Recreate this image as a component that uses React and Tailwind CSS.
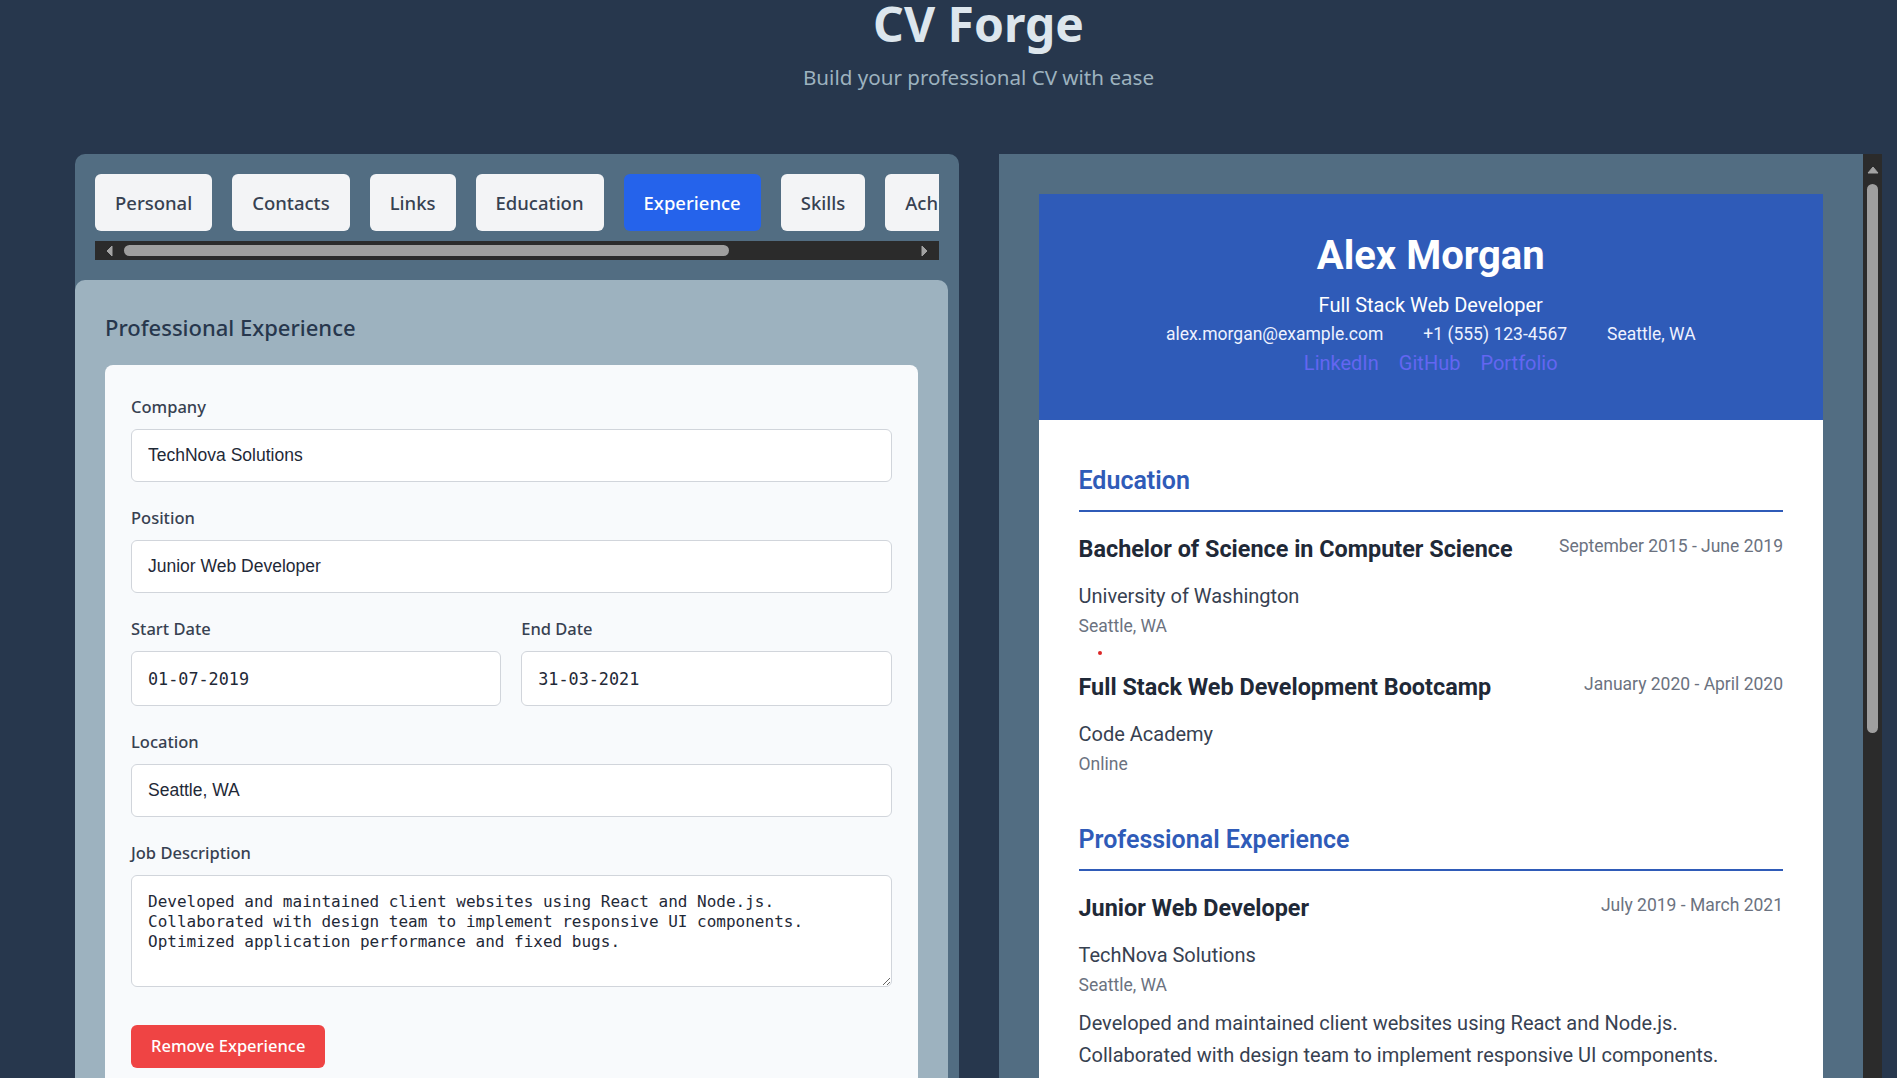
import React, { useState } from "react";

const tabs = ["Personal", "Contacts", "Links", "Education", "Experience", "Skills", "Achievements", "Certifications"];

const education = [
  {
    degree: "Bachelor of Science in Computer Science",
    school: "University of Washington",
    location: "Seattle, WA",
    dates: "September 2015 - June 2019",
  },
  {
    degree: "Full Stack Web Development Bootcamp",
    school: "Code Academy",
    location: "Online",
    dates: "January 2020 - April 2020",
  },
];

const jobDescription =
  "Developed and maintained client websites using React and Node.js.\nCollaborated with design team to implement responsive UI components.\nOptimized application performance and fixed bugs.";

const Field = ({ label, children, mb = "mb-6" }) => (
  <div className={mb}>
    <label className="block mb-[10px] text-[16.5px] leading-6 font-medium text-[#374151]">{label}</label>
    {children}
  </div>
);

const TextInput = ({ value, mono }) => (
  <input
    type="text"
    defaultValue={value}
    className={`w-full px-4 bg-white border border-[#d1d5db] rounded-md text-[#1f2937] outline-none ${
      mono ? "h-[55px] font-['DejaVu_Sans_Mono',monospace] text-[16.8px]" : "h-[53px] font-['Liberation_Sans',Arial,sans-serif] text-[17.5px]"
    }`}
  />
);

// dark scrollbar look-alikes (headless hides the native ones)
const Arrow = ({ dir }) => {
  const pts = { left: "7,1 7,11 2,6", right: "2,1 2,11 7,6", up: "1,8 11,8 6,2" }[dir];
  const box = dir === "up" ? "0 0 12 10" : "0 0 9 12";
  return (
    <svg viewBox={box} className={dir === "up" ? "w-[12px] h-[10px]" : "w-[9px] h-[12px]"}>
      <polygon points={pts} fill="#a3a3a3" strokeLinejoin="round" stroke="#a3a3a3" strokeWidth="1" />
    </svg>
  );
};

const SectionTitle = ({ children }) => (
  <h3 className="text-[25px] leading-8 font-semibold text-[#2f5bb8] pb-[13px] border-b-2 border-[#2f5bb8] mb-[22px]">{children}</h3>
);

const EntryHead = ({ title, dates }) => (
  <div className="flex justify-between items-start mb-[18px]">
    <h4 className="text-[23.4px] leading-[30px] font-bold text-[#1f2937]">{title}</h4>
    <span className="text-[17.5px] leading-6 text-[#6b7280]">{dates}</span>
  </div>
);

export default function App() {
  const [active, setActive] = useState("Experience");

  return (
    <div className="h-screen overflow-hidden bg-[#27374d] font-['Noto_Sans',sans-serif]">
      <div className="pl-[75px] pr-[15px]">
        {/* header */}
        <header className="text-center">
          <h1 className="text-[48px] leading-none font-bold text-[#dde6ed]">CV Forge</h1>
          <p className="mt-[15px] text-[20.6px] leading-7 text-[#9db2bf]">Build your professional CV with ease</p>
        </header>

        <div className="mt-[63px] grid grid-cols-2 gap-10">
          {/* editor */}
          <div className="bg-[#526d82] rounded-t-[10px]">
            <div className="p-5">
              <div className="flex gap-5 overflow-x-auto pb-[10px] [scrollbar-width:none]">
                {tabs.map((t) => (
                  <button
                    key={t}
                    onClick={() => setActive(t)}
                    className={`shrink-0 px-5 py-[15px] rounded-md text-[18.5px] leading-[27px] font-medium ${
                      active === t ? "bg-[#2563eb] text-white" : "bg-[#f3f4f6] text-[#374151]"
                    }`}
                  >
                    {t}
                  </button>
                ))}
              </div>
              <div className="h-[19px] bg-[#2b2b2b] flex items-center px-[10px] gap-[10px]">
                <Arrow dir="left" />
                <div className="h-[11px] w-[605px] rounded-full bg-[#9f9f9f]" />
                <div className="flex-1" />
                <Arrow dir="right" />
              </div>
            </div>

            <section className="mr-[11px] bg-[#9db2bf] rounded-t-[10px] px-[30px] pt-[31px] pb-10">
              <h2 className="text-[22px] leading-[33px] font-medium text-[#27374d] mb-[21px]">Professional Experience</h2>

              <div className="bg-[#f8fafc] rounded-lg px-[26px] pt-[30px] pb-8">
                <Field label="Company">
                  <TextInput value="TechNova Solutions" />
                </Field>
                <Field label="Position">
                  <TextInput value="Junior Web Developer" />
                </Field>
                <div className="grid grid-cols-2 gap-5">
                  <Field label="Start Date">
                    <TextInput value="01-07-2019" mono />
                  </Field>
                  <Field label="End Date">
                    <TextInput value="31-03-2021" mono />
                  </Field>
                </div>
                <Field label="Location">
                  <TextInput value="Seattle, WA" />
                </Field>
                <Field label="Job Description" mb="mb-[38px]">
                  <textarea
                    defaultValue={jobDescription}
                    className="block w-full h-[112px] px-4 py-4 bg-white border border-[#d1d5db] rounded-md text-[#1f2937] font-['DejaVu_Sans_Mono',monospace] text-[16px] leading-5 outline-none"
                  />
                </Field>
                <button className="h-[43px] px-5 rounded-md bg-[#ef4444] text-white text-[16.5px] font-medium">
                  Remove Experience
                </button>
              </div>
            </section>
          </div>

          {/* preview */}
          <div className="flex h-[1000px]">
            <div className="flex-1 overflow-hidden bg-[#526d82] p-10">
              <div className="bg-white font-['Roboto',sans-serif]">
                <div className="bg-[#2f5bb8] text-center pt-10 pb-[43px]">
                  <h1 className="text-[40px] leading-[44px] font-bold text-white">Alex Morgan</h1>
                  <p className="mt-[13px] text-[20px] leading-7 text-white">Full Stack Web Developer</p>
                  <div className="mt-[2px] flex justify-center gap-10 text-[17.5px] leading-[26px] text-[#eef2ff]">
                    <span>alex.morgan@example.com</span>
                    <span>+1 (555) 123-4567</span>
                    <span>Seattle, WA</span>
                  </div>
                  <div className="mt-[2px] flex justify-center gap-5 text-[20px] leading-7 text-[#6366f1]">
                    <a href="#">LinkedIn</a>
                    <a href="#">GitHub</a>
                    <a href="#">Portfolio</a>
                  </div>
                </div>

                <div className="px-10 pt-[45px] pb-16">
                  <section className="mb-[48px]">
                    <SectionTitle>Education</SectionTitle>
                    {education.map((e, i) => (
                      <div key={e.degree}>
                        <EntryHead title={e.degree} dates={e.dates} />
                        <p className="text-[20px] leading-7 text-[#374151]">{e.school}</p>
                        <p className="mt-[4px] text-[17.5px] leading-6 text-[#6b7280]">{e.location}</p>
                        {i === 0 && <div className="mt-[13px] mb-[17px] ml-[19px] w-[4px] h-[4px] rounded-full bg-[#dc2626]" />}
                      </div>
                    ))}
                  </section>

                  <section className="mb-[48px]">
                    <SectionTitle>Professional Experience</SectionTitle>
                    <EntryHead title="Junior Web Developer" dates="July 2019 - March 2021" />
                    <p className="text-[20px] leading-7 text-[#374151]">TechNova Solutions</p>
                    <p className="mt-[4px] text-[17.5px] leading-6 text-[#6b7280]">Seattle, WA</p>
                    <p className="mt-[10px] text-[20px] leading-8 text-[#374151] whitespace-pre-line">{jobDescription}</p>
                  </section>

                  <section className="mb-[48px]">
                    <SectionTitle>Skills</SectionTitle>
                    <div className="flex flex-wrap gap-3">
                      {["JavaScript", "React", "Node.js", "Express", "MongoDB", "HTML & CSS", "Tailwind CSS", "Git"].map((s) => (
                        <span key={s} className="px-3 py-1 rounded bg-[#e8eefb] text-[#2f5bb8] text-[17px]">{s}</span>
                      ))}
                    </div>
                  </section>

                  <section>
                    <SectionTitle>Achievements</SectionTitle>
                    <ul className="list-disc pl-6 text-[20px] leading-8 text-[#374151]">
                      <li>Reduced page load times by 40% across client projects</li>
                      <li>Led migration of legacy jQuery code to React</li>
                    </ul>
                  </section>
                </div>
              </div>
            </div>
            <div className="w-[19px] bg-[#2b2b2b] flex flex-col items-center pt-[11px] gap-[9px]">
              <Arrow dir="up" />
              <div className="w-[11px] h-[549px] rounded-full bg-[#9f9f9f]" />
            </div>
          </div>
        </div>
      </div>
    </div>
  );
}
